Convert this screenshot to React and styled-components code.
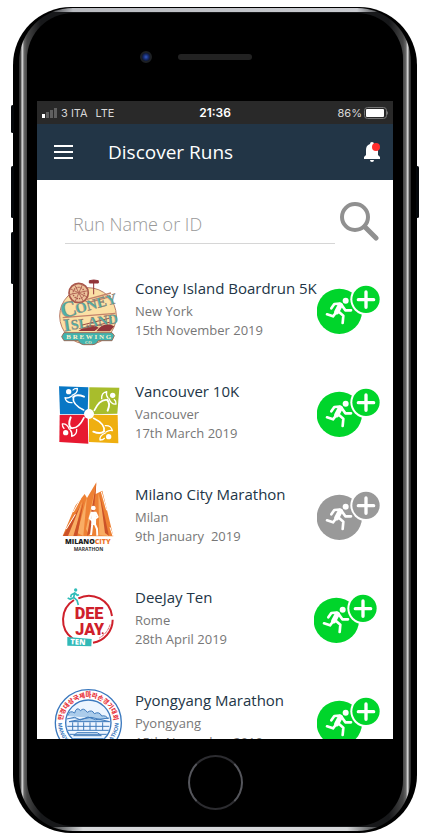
import React from "react";
import styled, { createGlobalStyle } from "styled-components";

const GlobalStyle = createGlobalStyle`
  * { box-sizing: border-box; }
  body { margin: 0; background: #fff; }
  button, input { font: inherit; }
`;

const uiFont = `"Open Sans", "Noto Sans", sans-serif`;

const Page = styled.div`
  height: 100vh;
  min-height: 480px;
  padding: 7px 13px;
  display: flex;
  font-family: ${uiFont};
`;

const Phone = styled.div`
  position: relative;
  flex: 1;
  display: flex;
  padding: 1px 6px 2px;
  background: #000;
  border-radius: 58px;
`;

const SideKey = styled.span`
  position: absolute;
  ${(p) => (p.$side === "right" ? "right: -2px;" : "left: -2px;")}
  top: ${(p) => p.$top}px;
  width: 3px;
  height: ${(p) => p.$length}px;
  border-radius: 2px;
  background: #05080b;
`;

const Rim = styled.div`
  flex: 1;
  min-width: 0;
  display: flex;
  padding: 5px 8px;
  border-radius: 54px;
  background:
    linear-gradient(to right, transparent 24px, #b9bbc0 54px, #c9cbd0 calc(100% - 54px), transparent calc(100% - 24px)) top / 100% 4px no-repeat,
    linear-gradient(to right, transparent 24px, #d5d7d9 64px, #d5d7d9 calc(100% - 64px), transparent calc(100% - 24px)) bottom / 100% 4px no-repeat,
    linear-gradient(to right, #292929 0, #4a4a4a 2px, #e8e8e8 3px, #b5b5b5 4px, #686868 5px, #454545 8px,
      #17181a 22px, #17181a calc(100% - 22px),
      #454545 calc(100% - 8px), #686868 calc(100% - 5px), #b5b5b5 calc(100% - 4px), #e8e8e8 calc(100% - 3px), #4a4a4a calc(100% - 2px), #292929 100%);
`;

const Face = styled.div`
  flex: 1;
  min-width: 0;
  display: flex;
  flex-direction: column;
  padding: 0 10px;
  border-radius: 46px;
  background: #000;
`;

const TopBezel = styled.div`
  flex: none;
  height: 88px;
  display: grid;
  grid-template-columns: 1fr 74px 1fr;
  align-items: center;
`;

const Camera = styled.span`
  justify-self: end;
  width: 12px;
  height: 12px;
  margin-right: 26px;
  border: 2px solid #1d2024;
  border-radius: 50%;
  background: radial-gradient(circle, #3157c5 0, #172a68 45%, #0b1122 85%);
`;

const Speaker = styled.span`
  height: 6px;
  border-radius: 3px;
  background: #222;
`;

const BottomBezel = styled.div`
  flex: none;
  height: 87px;
  display: grid;
  place-items: center;
`;

const HomeButton = styled.button`
  width: 55px;
  height: 55px;
  padding: 0;
  border: 2px solid #2c2c30;
  border-left-color: #55565c;
  border-right-color: #55565c;
  border-radius: 50%;
  background: #000;
`;

const Screen = styled.main`
  flex: 1;
  min-height: 0;
  display: flex;
  flex-direction: column;
  overflow: hidden;
  background: #fff;
`;

const StatusBar = styled.div`
  flex: none;
  height: 23px;
  padding: 0 4px;
  display: grid;
  grid-template-columns: 1fr auto 1fr;
  align-items: center;
  background: #292929;
  color: #d8d8d8;
  font: 11px/20px Inter, Roboto, sans-serif;
`;

const StatusGroup = styled.div`
  display: flex;
  align-items: center;
  gap: ${(p) => p.$gap}px;
  justify-content: ${(p) => (p.$end ? "flex-end" : "flex-start")};
`;

const Clock = styled.time`
  color: #fff;
  font-size: 12px;
  font-weight: 600;
`;

const AppBar = styled.header`
  flex: none;
  height: 56px;
  padding: 0 12px 0 16px;
  display: flex;
  align-items: center;
  background: #223546;
  color: #fff;
`;

const IconButton = styled.button`
  flex: none;
  padding: 0;
  border: 0;
  background: none;
  color: inherit;
  display: flex;
  cursor: pointer;
`;

const Title = styled.h1`
  flex: 1;
  margin: 0 0 0 34px;
  font-size: 19px;
  line-height: 28px;
  font-weight: 400;
`;

const SearchForm = styled.form`
  flex: none;
  height: 80px;
  padding: 21px 14px 0 28px;
  display: flex;
  align-items: flex-start;
  gap: 5px;
  color: #909090;
`;

const SearchInput = styled.input`
  flex: 1;
  min-width: 0;
  height: 43px;
  padding: 3px 8px 0;
  border: 0;
  border-bottom: 1px solid #d6d6d6;
  border-radius: 0;
  outline: 0;
  background: none;
  color: #223546;
  font-size: 18px;
  font-weight: 300;
  &::placeholder { color: #999; opacity: 1; }
`;

const RunList = styled.ul`
  flex: 1;
  min-height: 0;
  margin: 0;
  padding: 0;
  list-style: none;
  overflow-y: auto;
  scrollbar-width: none;
`;

const RunRow = styled.li`
  height: 103px;
  padding: 16px ${(p) => (p.$inset ? 15 : 12)}px 0 17px;
  display: flex;
  align-items: flex-start;
`;

const RunText = styled.div`
  flex: 1;
  width: 0;
  margin-left: 13px;
  white-space: nowrap;
`;

const RunName = styled.h2`
  margin: 0;
  padding-bottom: 2px;
  color: #223546;
  font-size: 15px;
  line-height: 24px;
  font-weight: 400;
`;

const RunMeta = styled.p`
  margin: 0;
  color: #777;
  font-size: 13px;
  line-height: 19px;
  white-space: pre;
`;

const LogoSvg = styled.svg`
  flex: none;
  width: 68px;
  height: 72px;
`;

const JoinButton = styled(IconButton)`
  margin-top: 8px;
  color: ${(p) => (p.$joined ? "#999" : "#00d52b")};
`;

function ConeyLogo() {
  return (
    <LogoSvg viewBox="12 18 204 216" role="img" aria-label="Coney Island Brewing">
      <circle cx="114" cy="138" r="85" fill="#fbe0a5" stroke="#b77b66" strokeWidth="3" />
      <circle cx="86" cy="69" r="29" fill="#ecc29b" stroke="#a9574b" strokeWidth="5" />
      <circle cx="86" cy="69" r="17" fill="none" stroke="#a9574b" strokeWidth="4" strokeDasharray="4 3" />
      <path d="M60 56l52 25M57 74l57-12M73 43l27 51M98 42L74 98" stroke="#b46959" strokeWidth="3" />
      <path d="M118 32q13-4 27 0v7h-27zM131 37v36" fill="#92353a" stroke="#92353a" strokeWidth="3" />
      <path d="M108 89l75-20M111 99l72-20M38 143l158-13" stroke="#c4826a" strokeWidth="4" />
      <path d="M85 183q38-28 61-10l-12 10zM139 184q23-32 54-15l-13 15z" fill="#92353a" />
      <path d="M93 166l92-23M100 176l82-20" stroke="#9e4b42" strokeWidth="3" />
      <g fontFamily="Liberation Serif, serif" fontWeight="700" fill="#4fb0a8" stroke="#a8685a" strokeWidth="1">
        <g transform="rotate(-15 39 143)"><text x="36" y="145" fontSize="68">C</text><text x="82" y="142" fontSize="44">ONEY</text></g>
        <g transform="rotate(-8 45 184)"><text x="43" y="184" fontSize="54">I</text><text x="65" y="182" fontSize="42">SLAND</text></g>
      </g>
      <path d="M42 188h144l7 9-7 15h-41q-6 12-16 12h-28q-10 0-16-12H42l-7-12z" fill="#41b3ae" stroke="#986c5b" strokeWidth="3" />
      <text x="49" y="207" fill="#fff1cb" fontFamily="Liberation Serif, serif" fontSize="21" fontWeight="700">B R E W I N G</text>
      <text x="105" y="221" fill="#fff1cb" fontFamily="Liberation Serif, serif" fontSize="13" fontWeight="700">CO</text>
    </LogoSvg>
  );
}

function FlowerFigure({ transform }) {
  return (
    <g transform={transform} fill="none" stroke="#fff" strokeLinecap="round" strokeLinejoin="round">
      <circle cx="56" cy="50" r="8" fill="#fff" stroke="none" />
      <path d="M101 105Q66 88 70 66" strokeWidth="5" />
      <path d="M70 66Q80 56 102 65" strokeWidth="6" />
      <path d="M66 61Q84 54 82 40Q72 40 69 45" strokeWidth="4" />
      <path d="M64 64Q54 71 45 68Q48 84 66 83" strokeWidth="4" />
    </g>
  );
}

function VancouverLogo() {
  return (
    <LogoSvg viewBox="12 12 204 216" role="img" aria-label="Vancouver run">
      <path d="M27 34l88 3-2 80-83 1z" fill="#0877c5" />
      <path d="M118 37l90 1-6 78-84 2z" fill="#a8bd2c" />
      <path d="M29 120l84-1 2 87-87-5z" fill="#e71931" />
      <path d="M117 119l86 1 2 85-88-4z" fill="#efaf10" />
      <FlowerFigure />
      <FlowerFigure transform="translate(238 5) rotate(90)" />
      <FlowerFigure transform="translate(232 235) rotate(180)" />
      <FlowerFigure transform="translate(-3 229) rotate(-90)" />
      <circle cx="117" cy="117" r="15" fill="#fff" />
    </LogoSvg>
  );
}

function MilanoLogo() {
  return (
    <LogoSvg viewBox="12 21 204 216" role="img" aria-label="Milano City Marathon">
      <path d="M38 183L76 92l28-35 7 12 28-47-2 35 20-10 33 137z" fill="#ee8134" />
      <path d="M43 181L96 80 73 183M82 174l29-110-11 119M108 162l28-122-17 143M148 181l-3-126 31 128z" fill="#f9ad64" />
      <path d="M39 183l54-96-39 96M101 78L70 183h12zM139 23l-28 160 15-12zM150 60l27 123-12-9z" fill="#cc5228" />
      <path d="M70 111l22-40M154 50l16 56M49 162l27-44M180 157l9 26" stroke="#fff" strokeWidth="3" />
      <circle cx="130" cy="99" r="7" fill="#fff" />
      <path d="M123 110h16l-1 40h-14z" fill="#fff" />
      <path d="M125 112l-6 18 8 7M137 113l6 13-8 5M127 146l-4 34M134 146l7 16 1 20" fill="none" stroke="#fff" strokeWidth="6" strokeLinejoin="round" />
      <text x="45" y="208" fontFamily="Open Sans, sans-serif" fontSize="21" fontWeight="800" fill="#202020">MILANO<tspan fill="#ed762d">CITY</tspan></text>
      <text x="71" y="228" fontFamily="Open Sans, sans-serif" fontSize="15" fontWeight="700" fill="#333">MARATHON</text>
    </LogoSvg>
  );
}

function DeejayLogo() {
  return (
    <LogoSvg viewBox="12 15 204 216" role="img" aria-label="DeeJay Ten">
      <path d="M72 60A70 70 0 0 0 68 176M85 55A70 70 0 0 1 186 108M188 119A70 70 0 0 1 129 188" fill="none" stroke="#cf202b" strokeWidth="6" />
      <path d="M180 134q-8 26-32 40" fill="none" stroke="#cf202b" strokeWidth="3" strokeDasharray="3 2" />
      <g fontFamily="Roboto, sans-serif" fontWeight="900" fill="#cf202b">
        <text x="74" y="116" fontSize="49">DEE</text>
        <text x="76" y="164" fontSize="48">JAY</text>
      </g>
      <circle cx="158" cy="160" r="3" fill="#cf202b" />
      <circle cx="77" cy="30" r="5" fill="#31bdb9" />
      <path d="M75 37l-4 15 10 9 4 14M70 53l-9 5-8-4M73 40l-9 4-2 8M76 40l6 6 5-2" fill="none" stroke="#31bdb9" strokeWidth="5" strokeLinejoin="round" />
      <path d="M52 171l73 6-1 22-72-2z" fill="#31b9b7" />
      <text x="61" y="193" fontFamily="Open Sans, sans-serif" fontSize="23" fontWeight="800" fill="#fff" transform="rotate(2 61 193)">TEN</text>
    </LogoSvg>
  );
}

function PyongyangLogo() {
  return (
    <LogoSvg viewBox="27 24 204 216" role="img" aria-label="Pyongyang Marathon">
      <defs>
        <path id="sealTop" d="M53 129A77 77 0 0 1 207 129" />
        <path id="sealBottom" d="M39 125A91 91 0 0 0 221 125" />
        <clipPath id="sealInner"><circle cx="130" cy="128" r="66" /></clipPath>
      </defs>
      <circle cx="130" cy="128" r="99" fill="#fff" stroke="#3a78be" strokeWidth="4" />
      <circle cx="130" cy="128" r="68" fill="#edf5ff" stroke="#3a78be" strokeWidth="4" />
      <g clipPath="url(#sealInner)" fill="none" stroke="#3f7abb" strokeWidth="3">
        <path d="M67 108q8-20 22-9 5-21 18-7 8-11 20 5 14-10 21 4 15-8 22 7 14-3 19 9M65 117l24-5 17 8 23-9 22 8 42-5M72 125l66-13 56 13H72" fill="#abcceb" />
        <path d="M83 127v24M99 127v24M116 127v24M135 127v24M153 127v24M173 127v24M67 139h126M67 151h126M68 163h124M96 158h61l12 9H86zM70 176h121M78 183h108M89 190h83" />
      </g>
      <text fill="#e8343c" fontFamily="Noto Sans CJK KR, sans-serif" fontWeight="900" fontSize="19">
        <textPath href="#sealTop" startOffset="50%" textAnchor="middle">만경대상국제마라손경기대회</textPath>
      </text>
      <text fill="#3a78be" fontFamily="Open Sans, sans-serif" fontWeight="700" fontSize="16">
        <textPath href="#sealBottom" startOffset="50%" textAnchor="middle">MANGYONGDAE PRIZE MARATHON</textPath>
      </text>
    </LogoSvg>
  );
}

function RunnerIcon() {
  return (
    <svg width="64" height="52" viewBox="51 42 192 156" fill="none" aria-hidden="true">
      <circle cx="118" cy="124" r="68" fill="currentColor" />
      <circle cx="198" cy="88" r="47" fill="#fff" />
      <circle cx="198" cy="88" r="41" fill="currentColor" />
      <path d="M175 89h46M198 66v46" stroke="#fff" strokeWidth="10" strokeLinecap="round" />
      <circle cx="137" cy="92" r="9" fill="#fff" />
      <g stroke="#fff" strokeWidth="8" strokeLinecap="round" strokeLinejoin="round">
        <path d="M119 101l-16 1-9 13M125 105l11 16h17M107 129l-8 10-18-6M118 127l12 10-2 22" />
        <path d="M121 105l-11 21" strokeWidth="15" />
      </g>
    </svg>
  );
}

function MenuIcon() {
  return (
    <svg width="21" height="14" viewBox="0 0 21 14" aria-hidden="true">
      <path d="M1 1h19M1 7h19M1 13h19" stroke="currentColor" strokeWidth="2" />
    </svg>
  );
}

function BellIcon() {
  return (
    <svg width="18" height="22" viewBox="0 0 18 22" aria-hidden="true">
      <path d="M9 1a2 2 0 0 0-2 2C4 4 3 6 3 9v5l-2 2v2h16v-2l-2-2V9c0-3-1-5-4-6a2 2 0 0 0-2-2zM7 19a2 2 0 0 0 4 0z" fill="currentColor" />
      <circle cx="13" cy="6" r="4" fill="#ff2d2d" />
    </svg>
  );
}

function SearchIcon() {
  return (
    <svg width="39" height="40" viewBox="0 0 39 40" fill="none" stroke="currentColor" aria-hidden="true">
      <circle cx="15" cy="16" r="13" strokeWidth="4" />
      <path d="M25 26l11 11" strokeWidth="5" strokeLinecap="round" />
    </svg>
  );
}

function SignalIcon() {
  return (
    <svg width="17" height="10" viewBox="0 0 17 10" aria-hidden="true">
      <path d="M1 6h3v4H1z" fill="#fff" />
      <path d="M5 4h3v6H5zM9 2h3v8H9zM13 0h3v10h-3z" fill="#606060" />
    </svg>
  );
}

function BatteryIcon() {
  return (
    <svg width="25" height="12" viewBox="0 0 25 12" aria-hidden="true">
      <rect x="0.5" y="0.5" width="22" height="11" rx="3" fill="none" stroke="#777" />
      <rect x="2" y="2" width="18" height="8" rx="1" fill="#fff" />
      <path d="M23 4q2 2 0 4z" fill="#777" />
    </svg>
  );
}

const runs = [
  { name: "Coney Island Boardrun 5K", place: "New York", date: "15th November 2019", Logo: ConeyLogo },
  { name: "Vancouver 10K", place: "Vancouver", date: "17th March 2019", Logo: VancouverLogo },
  { name: "Milano City Marathon", place: "Milan", date: "9th January  2019", Logo: MilanoLogo, joined: true },
  { name: "DeeJay Ten", place: "Rome", date: "28th April 2019", Logo: DeejayLogo, inset: true },
  { name: "Pyongyang Marathon", place: "Pyongyang", date: "15th November 2019", Logo: PyongyangLogo },
];

export default function App() {
  return (
    <Page>
      <GlobalStyle />
      <Phone>
        <SideKey $top={98} $length={28} />
        <SideKey $top={159} $length={52} />
        <SideKey $top={225} $length={52} />
        <SideKey $side="right" $top={159} $length={52} />
        <Rim>
          <Face>
            <TopBezel><Camera /><Speaker /></TopBezel>
            <Screen>
              <StatusBar>
                <StatusGroup $gap={3}>
                  <SignalIcon />
                  <StatusGroup $gap={8}><span>3 ITA</span><span>LTE</span></StatusGroup>
                </StatusGroup>
                <Clock>21:36</Clock>
                <StatusGroup $gap={2} $end><span>86%</span><BatteryIcon /></StatusGroup>
              </StatusBar>
              <AppBar>
                <IconButton type="button" aria-label="Menu"><MenuIcon /></IconButton>
                <Title>Discover Runs</Title>
                <IconButton type="button" aria-label="Notifications"><BellIcon /></IconButton>
              </AppBar>
              <SearchForm onSubmit={(e) => e.preventDefault()}>
                <SearchInput aria-label="Run Name or ID" placeholder="Run Name or ID" />
                <IconButton type="submit" aria-label="Search"><SearchIcon /></IconButton>
              </SearchForm>
              <RunList>
                {runs.map(({ name, place, date, Logo, joined, inset }) => (
                  <RunRow key={name} $inset={inset}>
                    <Logo />
                    <RunText>
                      <RunName>{name}</RunName>
                      <RunMeta>{place}</RunMeta>
                      <RunMeta>{date}</RunMeta>
                    </RunText>
                    <JoinButton type="button" $joined={joined} aria-label={`Join ${name}`}><RunnerIcon /></JoinButton>
                  </RunRow>
                ))}
              </RunList>
            </Screen>
            <BottomBezel><HomeButton type="button" aria-label="Home" /></BottomBezel>
          </Face>
        </Rim>
      </Phone>
    </Page>
  );
}
